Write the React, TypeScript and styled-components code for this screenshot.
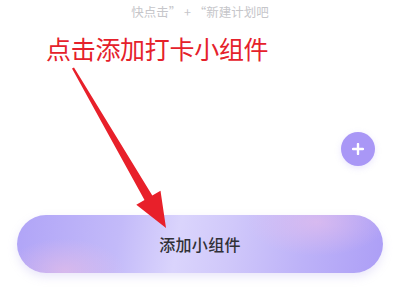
import React from 'react';
import styled, { createGlobalStyle } from 'styled-components';

const GlobalStyle = createGlobalStyle`
  html, body {
    margin: 0;
    padding: 0;
    background: #ffffff;
  }
  body {
    font-family: "Noto Sans CJK SC", "Noto Sans", sans-serif;
  }
`;

const Page = styled.div`
  position: relative;
  width: 400px;
  height: 289px;
  overflow: hidden;
  display: flex;
  flex-direction: column;
  background: #ffffff;
`;

const Hint = styled.div`
  padding-top: 3px;
  text-align: center;
  font-size: 12.5px;
  line-height: 18px;
  color: #c6c6ca;
`;

const FabRow = styled.div`
  display: flex;
  justify-content: flex-end;
  padding: 111px 25px 0 0;
`;

const Fab = styled.button`
  width: 34px;
  height: 34px;
  border: none;
  border-radius: 50%;
  padding: 0;
  background: #a997f6;
  display: flex;
  align-items: center;
  justify-content: center;
  box-shadow: 0 2px 6px rgba(169, 151, 246, 0.25);
`;

const AddWidget = styled.button`
  margin: 49px 17px 0 17px;
  height: 58px;
  border: none;
  border-radius: 29px;
  font-family: inherit;
  font-size: 16px;
  font-weight: 500;
  letter-spacing: 0.3px;
  color: #303036;
  background:
    radial-gradient(ellipse 60px 32px at 13% 96%, rgba(234, 190, 228, 0.6), rgba(234, 190, 228, 0) 100%),
    radial-gradient(ellipse 70px 34px at 82% 12%, rgba(234, 192, 234, 0.6), rgba(234, 192, 234, 0) 100%),
    linear-gradient(100deg, #b0a4f7 0%, #c3baf9 28%, #dad4fc 44%, #d0c8fa 58%, #bdb2f8 78%, #ac9ef6 100%);
  box-shadow: 0 4px 10px rgba(170, 160, 235, 0.25);
`;

const Annotation = styled.div`
  position: absolute;
  left: 46px;
  top: 32px;
  font-size: 25px;
  line-height: 32px;
  color: #e5212b;
  letter-spacing: -0.3px;
`;

const ArrowLayer = styled.svg`
  position: absolute;
  left: 0;
  top: 0;
  width: 400px;
  height: 289px;
  pointer-events: none;
`;

function App() {
  return (
    <Page>
      <GlobalStyle />
      <Hint>快点击” + “新建计划吧</Hint>
      <FabRow>
        <Fab aria-label="add">
          <svg width="12" height="12" viewBox="0 0 12 12">
            <path d="M6 1v10M1 6h10" stroke="#ffffff" strokeWidth="2.4" strokeLinecap="round" />
          </svg>
        </Fab>
      </FabRow>
      <AddWidget>添加小组件</AddWidget>
      <Annotation>点击添加打卡小组件</Annotation>
      <ArrowLayer viewBox="0 0 400 289">
        <polygon
          points="72,68.5 144.5,200.1 136.3,204.8 166,228 160.5,190.8 152.3,195.5 74,67.5"
          fill="#e8202a"
        />
      </ArrowLayer>
    </Page>
  );
}

export default App;
